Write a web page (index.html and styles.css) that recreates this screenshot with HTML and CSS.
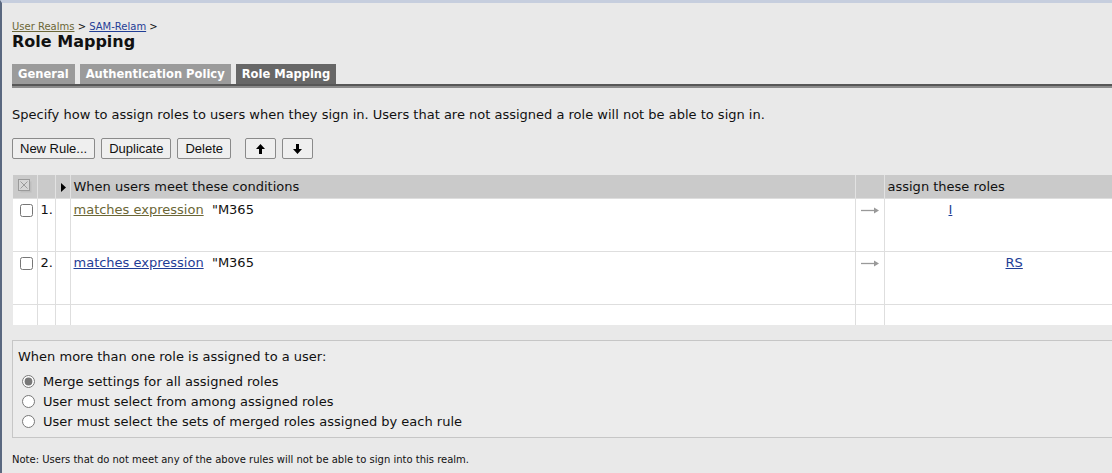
FILE: index.html
```html
<!DOCTYPE html>
<html lang="en">
<head>
<meta charset="UTF-8">
<meta name="viewport" content="width=device-width, initial-scale=1.0">
<title>Role Mapping</title>
<link rel="stylesheet" href="styles.css">
</head>
<body>

<div class="page">
    <div class="crumbs"><a href="#" class="visited">User Realms</a> &gt; <a href="#">SAM-Relam</a> &gt;</div>
    <h1 class="title">Role Mapping</h1>

    <div class="tabs">
        <span class="tab">General</span>
        <span class="tab">Authentication Policy</span>
        <span class="tab active">Role Mapping</span>
    </div>
    <div class="tab-rule"></div>

    <p class="intro">Specify how to assign roles to users when they sign in. Users that are not assigned a role will not be able to sign in.</p>

    <div class="toolbar">
        <button class="btn">New Rule...</button>
        <button class="btn">Duplicate</button>
        <button class="btn">Delete</button>
        <button class="btn btn-arrow first-arrow">
            <svg width="9" height="10" viewBox="0 0 9 10"><polygon points="4.5,0 9,5 6,5 6,10 3,10 3,5 0,5" fill="#000"/></svg>
        </button>
        <button class="btn btn-arrow">
            <svg width="9" height="10" viewBox="0 0 9 10"><polygon points="4.5,10 9,5 6,5 6,0 3,0 3,5 0,5" fill="#000"/></svg>
        </button>
    </div>

    <table class="rules">
        <colgroup>
            <col class="c-check">
            <col class="c-num">
            <col class="c-exp">
            <col>
            <col class="c-arrow">
            <col class="c-roles">
        </colgroup>
        <thead>
            <tr>
                <th class="check">
                    <svg width="14" height="14" viewBox="0 0 14 14">
                        <rect x="2.5" y="2.5" width="11" height="11" fill="#bdbdbd"/>
                        <rect x="0.5" y="0.5" width="11" height="11" fill="#d6d6d6" stroke="#9a9a9a"/>
                        <path d="M2.5 2.5 L9.5 9.5 M9.5 2.5 L2.5 9.5" stroke="#9a9a9a" stroke-width="1"/>
                    </svg>
                </th>
                <th></th>
                <th class="exp">
                    <svg width="5" height="9" viewBox="0 0 5 9"><polygon points="0,0 5,4.5 0,9" fill="#000"/></svg>
                </th>
                <th>When users meet these conditions</th>
                <th></th>
                <th>assign these roles</th>
            </tr>
        </thead>
        <tbody>
            <tr class="rule">
                <td class="check"><input type="checkbox"></td>
                <td class="num">1.</td>
                <td></td>
                <td><a href="#" class="visited">matches expression</a>&nbsp;&nbsp;"M365</td>
                <td class="arrow">
                    <svg width="18" height="7" viewBox="0 0 18 7"><path d="M0 3.5 H14" stroke="#999" stroke-width="1.3"/><polygon points="13,0.5 18,3.5 13,6.5" fill="#999"/></svg>
                </td>
                <td><a href="#" class="role role-one">I</a></td>
            </tr>
            <tr class="rule">
                <td class="check"><input type="checkbox"></td>
                <td class="num">2.</td>
                <td></td>
                <td><a href="#">matches expression</a>&nbsp;&nbsp;"M365</td>
                <td class="arrow">
                    <svg width="18" height="7" viewBox="0 0 18 7"><path d="M0 3.5 H14" stroke="#999" stroke-width="1.3"/><polygon points="13,0.5 18,3.5 13,6.5" fill="#999"/></svg>
                </td>
                <td><a href="#" class="role role-two">RS</a></td>
            </tr>
            <tr class="empty">
                <td></td><td></td><td></td><td></td><td></td><td></td>
            </tr>
        </tbody>
    </table>

    <div class="merge-box">
        <div class="merge-title">When more than one role is assigned to a user:</div>
        <label class="opt"><input type="radio" name="merge" checked> Merge settings for all assigned roles</label>
        <label class="opt"><input type="radio" name="merge"> User must select from among assigned roles</label>
        <label class="opt"><input type="radio" name="merge"> User must select the sets of merged roles assigned by each rule</label>
    </div>

    <p class="note">Note: Users that do not meet any of the above rules will not be able to sign into this realm.</p>
</div>

</body>
</html>
```

FILE: styles.css
```css
body {
    margin: 0;
    font-family: "DejaVu Sans", Verdana, sans-serif;
    font-size: 13px;
    color: #111;
    background-color: #e9e9e9;
    border-top: 3px solid #c6cede;
    border-left: 2px solid #5a6880;
    min-height: 470px;
}
a {
    color: #1f3d96;
}
a.visited {
    color: #6b6636;
}
.page {
    padding-left: 10px;
}
.crumbs {
    font-size: 10px;
    line-height: 13px;
    padding-top: 17px;
}
.title {
    margin: 0;
    font-size: 16px;
    line-height: 18px;
    font-weight: bold;
}
.tabs {
    display: flex;
    gap: 5px;
    margin-top: 13px;
}
.tab {
    font-family: "DejaVu Sans Condensed", "DejaVu Sans", sans-serif;
    font-size: 12.8px;
    background-color: #9b9b9b;
    color: #fff;
    font-weight: bold;
    line-height: 20px;
    padding: 0 6px;
}
.tab.active {
    background-color: #676767;
}
.tab-rule {
    height: 2px;
    background-color: #575757;
    border-bottom: 2px solid #8c8c8c;
}
.intro {
    margin: 19px 0 0;
    line-height: 16px;
}
.toolbar {
    display: flex;
    gap: 6px;
    margin-top: 15px;
}
.btn {
    height: 21px;
    padding: 0 7px;
    font-family: "Liberation Sans", Arial, sans-serif;
    font-size: 13px;
    color: #111;
    background-color: #efefef;
    border: 1px solid #8a8a8a;
    border-radius: 2px;
}
.btn-arrow {
    width: 31px;
    display: flex;
    align-items: center;
    justify-content: center;
}
.first-arrow {
    margin-left: 8px;
}
.rules {
    margin: 16px 0 0 1px;
    width: calc(100% - 1px);
    border-collapse: collapse;
    table-layout: fixed;
}
.c-check { width: 24px; }
.c-num { width: 18px; }
.c-exp { width: 15px; }
.c-arrow { width: 29px; }
.c-roles { width: 228px; }
.rules th {
    height: 21px;
    padding: 0 3px;
    background-color: #cacaca;
    font-weight: normal;
    text-align: left;
    border-left: 1px solid #e2e2e2;
}
.rules tr.rule {
    height: 53px;
}
.rules td {
    padding: 3px 3px 0;
    vertical-align: top;
    line-height: 16px;
    background-color: #fff;
    border-top: 1px solid #dedede;
    border-left: 1px solid #dedede;
}
.rules th:first-child,
.rules td:first-child {
    border-left: none;
}
.rules th.check {
    text-align: center;
    padding: 2px 0 0;
}
.rules th.exp {
    padding: 2px 0 0 5px;
}
.rules td.check {
    padding: 3px 0 0 7px;
}
.rules td.check input {
    display: block;
    margin: 2px 0 0;
    width: 13px;
    height: 13px;
}
.rules td.num {
    padding-left: 3px;
}
.rules td.arrow {
    padding: 8px 0 0 5px;
}
.rules td.arrow svg {
    display: block;
}
.rules tr.empty {
    height: 20px;
}
.rules tr.empty td {
    padding: 0;
}
.role-one {
    margin-left: 61px;
}
.role-two {
    margin-left: 118px;
}
.merge-box {
    margin-top: 15px;
    padding: 8px 0 5px 5px;
    background-color: #ececec;
    border: 1px solid #c6c6c6;
    border-right: none;
}
.merge-title {
    line-height: 16px;
    margin-bottom: 7px;
}
.opt {
    display: flex;
    align-items: center;
    gap: 8px;
    height: 20px;
    padding-left: 4px;
}
.opt input {
    margin: 0;
    width: 13px;
    height: 13px;
    accent-color: #777;
}
.note {
    margin: 16px 0 0;
    font-size: 10px;
    line-height: 12px;
}
```
